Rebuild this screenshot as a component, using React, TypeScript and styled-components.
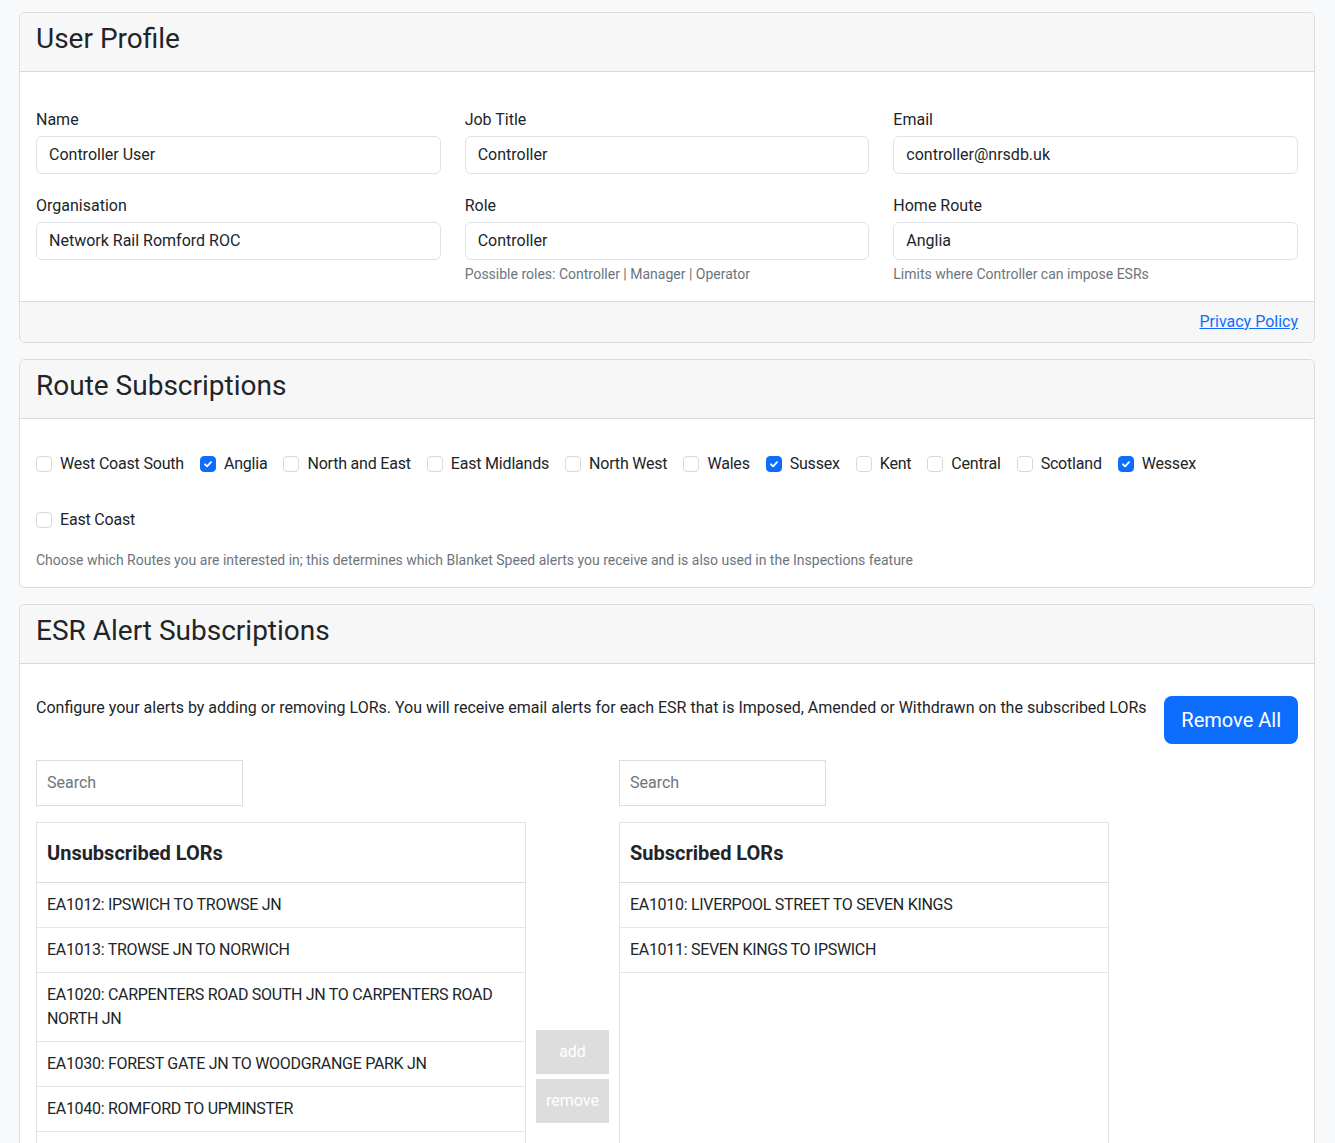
import React from 'react';
import styled, { createGlobalStyle } from 'styled-components';

const GlobalStyle = createGlobalStyle`
  html {
    scrollbar-width: none;
  }
  body {
    margin: 0;
    background: #f8f9fa;
    color: #212529;
    font-family: Roboto, 'Liberation Sans', sans-serif;
    font-size: 16px;
    line-height: 24px;
  }
  * {
    box-sizing: border-box;
  }
`;

const routes = [
  { name: 'West Coast South', checked: false },
  { name: 'Anglia', checked: true },
  { name: 'North and East', checked: false },
  { name: 'East Midlands', checked: false },
  { name: 'North West', checked: false },
  { name: 'Wales', checked: false },
  { name: 'Sussex', checked: true },
  { name: 'Kent', checked: false },
  { name: 'Central', checked: false },
  { name: 'Scotland', checked: false },
  { name: 'Wessex', checked: true },
  { name: 'East Coast', checked: false },
];

const unsubscribed = [
  'EA1012: IPSWICH TO TROWSE JN',
  'EA1013: TROWSE JN TO NORWICH',
  'EA1020: CARPENTERS ROAD SOUTH JN TO CARPENTERS ROAD NORTH JN',
  'EA1030: FOREST GATE JN TO WOODGRANGE PARK JN',
  'EA1040: ROMFORD TO UPMINSTER',
];

const subscribed = ['EA1010: LIVERPOOL STREET TO SEVEN KINGS', 'EA1011: SEVEN KINGS TO IPSWICH'];

const Check = ({ checked }: { checked: boolean }) => (
  <Box $checked={checked}>
    {checked && (
      <svg width="12" height="12" viewBox="0 0 20 20">
        <path d="M5 10.5l3.5 3.5l6.5-7" fill="none" stroke="#fff" strokeWidth="3" strokeLinecap="round" strokeLinejoin="round" />
      </svg>
    )}
  </Box>
);

const App = () => (
  <Page>
    <GlobalStyle />

    <Card>
      <CardHeader>
        <CardTitle>User Profile</CardTitle>
      </CardHeader>
      <CardBody>
        <ProfileGrid>
          <Field>
            <Label>Name</Label>
            <Input>Controller User</Input>
          </Field>
          <Field>
            <Label>Job Title</Label>
            <Input>Controller</Input>
          </Field>
          <Field>
            <Label>Email</Label>
            <Input>controller@nrsdb.uk</Input>
          </Field>
          <Field>
            <Label>Organisation</Label>
            <Input>Network Rail Romford ROC</Input>
          </Field>
          <Field>
            <Label>Role</Label>
            <Input>Controller</Input>
            <HelpText>Possible roles: Controller | Manager | Operator</HelpText>
          </Field>
          <Field>
            <Label>Home Route</Label>
            <Input>Anglia</Input>
            <HelpText>Limits where Controller can impose ESRs</HelpText>
          </Field>
        </ProfileGrid>
      </CardBody>
      <CardFooter>
        <Link href="#">Privacy Policy</Link>
      </CardFooter>
    </Card>

    <Card>
      <CardHeader>
        <CardTitle>Route Subscriptions</CardTitle>
      </CardHeader>
      <CardBody>
        <CheckList>
          {routes.map((r) => (
            <CheckItem key={r.name}>
              <Check checked={r.checked} />
              {r.name}
            </CheckItem>
          ))}
        </CheckList>
        <HelpText $spaced>
          Choose which Routes you are interested in; this determines which Blanket Speed alerts you receive and is
          also used in the Inspections feature
        </HelpText>
      </CardBody>
    </Card>

    <Card $open>
      <CardHeader>
        <CardTitle>ESR Alert Subscriptions</CardTitle>
      </CardHeader>
      <CardBody>
        <IntroRow>
          <Intro>
            Configure your alerts by adding or removing LORs. You will receive email alerts for each ESR that is
            Imposed, Amended or Withdrawn on the subscribed LORs
          </Intro>
          <PrimaryButton>Remove All</PrimaryButton>
        </IntroRow>

        <DualList>
          <Search>Search</Search>
          <span />
          <Search>Search</Search>

          <ListBox>
            <ListHeader>Unsubscribed LORs</ListHeader>
            {unsubscribed.map((l) => (
              <ListItem key={l}>{l}</ListItem>
            ))}
          </ListBox>
          <Actions>
            <GreyButton>add</GreyButton>
            <GreyButton>remove</GreyButton>
          </Actions>
          <ListBox>
            <ListHeader>Subscribed LORs</ListHeader>
            {subscribed.map((l) => (
              <ListItem key={l}>{l}</ListItem>
            ))}
          </ListBox>
        </DualList>
      </CardBody>
    </Card>
  </Page>
);

const Page = styled.div`
  padding: 12px 20px 0 19px;
`;

const Card = styled.section<{ $open?: boolean }>`
  background: #fff;
  border: 1px solid #dcdcdc;
  border-radius: 6px;
  margin-bottom: 16px;
  overflow: hidden;
  ${(p) => p.$open && 'border-bottom: 0; border-bottom-left-radius: 0; border-bottom-right-radius: 0;'}
`;

const CardHeader = styled.div`
  background: #f7f7f7;
  border-bottom: 1px solid #d9d9d9;
  padding: 9px 16px 8px;
`;

const CardTitle = styled.h3`
  margin: 0 0 7px;
  font-size: 28px;
  font-weight: 400;
  line-height: 34px;
`;

const CardBody = styled.div`
  padding: 16px;
`;

const CardFooter = styled.div`
  background: #f7f7f7;
  border-top: 1px solid #d9d9d9;
  padding: 8px 16px;
  text-align: right;
`;

const Link = styled.a`
  color: #0d6efd;
  text-decoration: underline;
`;

const ProfileGrid = styled.div`
  display: grid;
  grid-template-columns: repeat(3, 1fr);
  column-gap: 24px;
  row-gap: 20px;
  padding-top: 20px;
`;

const Field = styled.div`
  display: flex;
  flex-direction: column;
`;

const Label = styled.label`
  margin-bottom: 4px;
`;

const Input = styled.div`
  height: 38px;
  padding: 6px 12px;
  border: 1px solid #dee2e6;
  border-radius: 6px;
  background: #fff;
`;

const HelpText = styled.div<{ $spaced?: boolean }>`
  margin-top: ${(p) => (p.$spaced ? '18px' : '4px')};
  font-size: 14px;
  line-height: 21px;
  color: #6c757d;
`;

const CheckList = styled.div`
  display: flex;
  flex-wrap: wrap;
  row-gap: 32px;
  padding-top: 17px;
`;

const CheckItem = styled.label`
  display: flex;
  align-items: center;
  height: 24px;
  margin-right: 16px;
  letter-spacing: -0.2px;
`;

const Box = styled.span<{ $checked: boolean }>`
  display: inline-flex;
  align-items: center;
  justify-content: center;
  width: 16px;
  height: 16px;
  margin-right: 8px;
  border-radius: 4px;
  border: 1px solid ${(p) => (p.$checked ? '#0d6efd' : '#d5d9dd')};
  background: ${(p) => (p.$checked ? '#0d6efd' : '#fff')};
`;

const IntroRow = styled.div`
  display: flex;
  justify-content: space-between;
  align-items: flex-start;
  gap: 8px;
  margin-top: 16px;
`;

const Intro = styled.p`
  margin: 0;
`;

const PrimaryButton = styled.button`
  flex-shrink: 0;
  background: #0d6efd;
  color: #fff;
  border: 0;
  border-radius: 8px;
  padding: 9px 17px;
  font-family: inherit;
  font-size: 20px;
  line-height: 30px;
`;

const DualList = styled.div`
  display: grid;
  grid-template-columns: 490px 73px 490px;
  column-gap: 10px;
  row-gap: 16px;
  margin-top: 16px;
`;

const Search = styled.div`
  width: 207px;
  height: 46px;
  padding: 10px;
  border: 1px solid #dcdcdc;
  color: #6c757d;
`;

const ListBox = styled.div`
  height: 508px;
  overflow: hidden;
  border: 1px solid #e3e3e3;
`;

const ListHeader = styled.div`
  height: 60px;
  display: flex;
  align-items: center;
  padding: 0 10px;
  border-bottom: 1px solid #dcdcdc;
  font-size: 20px;
  font-weight: 700;
`;

const ListItem = styled.div`
  padding: 10px;
  border-bottom: 1px solid #e6e6e6;
  letter-spacing: -0.3px;
`;

const Actions = styled.div`
  display: flex;
  flex-direction: column;
  justify-content: center;
  gap: 5px;
`;

const GreyButton = styled.button`
  height: 44px;
  background: #dddddd;
  color: #fff;
  border: 0;
  font-family: inherit;
  font-size: 16px;
`;

export default App;
